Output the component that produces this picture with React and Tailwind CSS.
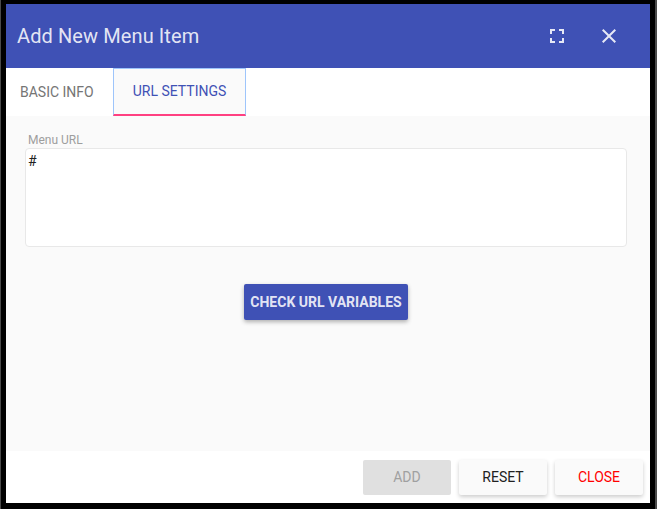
import { useState } from "react";

function FullscreenIcon() {
  return (
    <svg viewBox="0 0 24 24" className="w-6 h-6" fill="currentColor">
      <path d="M7 14H5v5h5v-2H7v-3zm-2-4h2V7h3V5H5v5zm12 7h-3v2h5v-5h-2v3zM14 5v2h3v3h2V5h-5z" />
    </svg>
  );
}

function CloseIcon() {
  return (
    <svg viewBox="0 0 24 24" className="w-6 h-6" fill="currentColor">
      <path d="M19 6.41L17.59 5 12 10.59 6.41 5 5 6.41 10.59 12 5 17.59 6.41 19 12 13.41 17.59 19 19 17.59 13.41 12z" />
    </svg>
  );
}

export default function App() {
  const [tab, setTab] = useState(1);
  const [url] = useState("#");

  return (
    <div
      className="w-[657px] h-[509px] bg-black flex overflow-hidden"
      style={{ fontFamily: "Roboto, 'Noto Sans', sans-serif" }}
    >
      <div className="w-[1px] bg-[#4a4a4a] shrink-0" />
      <div className="w-[5px] shrink-0" />

      <div className="w-[644px] shrink-0 flex flex-col pt-[4px]">
        <div className="h-[499px] flex flex-col">
          {/* Header */}
          <div className="h-[64px] bg-[#3f51b5] flex items-center pl-[11px] pr-[29px] shrink-0">
            <h2 className="text-[20px] tracking-[0.1px] leading-none text-white/[0.87] font-normal">
              Add New Menu Item
            </h2>
            <div className="ml-auto flex items-center gap-[28px] text-white/[0.87]">
              <button>
                <FullscreenIcon />
              </button>
              <button>
                <CloseIcon />
              </button>
            </div>
          </div>

          {/* Tabs */}
          <div className="h-[48px] bg-white flex shrink-0">
            <button
              onClick={() => setTab(0)}
              className={`w-[107px] h-full flex items-center pl-[14px] text-[14px] uppercase ${
                tab === 0 ? "text-[#3f51b5] bg-[#fafafa] border-b-2 border-[#ff4081]" : "text-[#757575]"
              }`}
            >
              Basic Info
            </button>
            <button
              onClick={() => setTab(1)}
              className={`w-[133px] h-full flex items-center justify-center text-[14px] uppercase ${
                tab === 1
                  ? "text-[#3f51b5] bg-[#fafafa] border border-[#9ec5fb] border-b-2 border-b-[#ff4081]"
                  : "text-[#757575]"
              }`}
            >
              URL Settings
            </button>
          </div>

          {/* Content */}
          <div className="flex-1 bg-[#fafafa] pl-[19px] pr-[23px] pt-[17px]">
            <label className="block pl-[3px] text-[12px] leading-[14px] text-[#9e9e9e]">
              Menu URL
            </label>
            <div className="mt-[1px] h-[99px] bg-white border border-[#e8e8e8] rounded-[4px] pl-[2px] pt-[2px] text-[14px] text-[#212121]">
              {url}
            </div>
            <div className="flex justify-center mt-[37px]">
              <button className="w-[164px] h-[36px] bg-[#3f51b5] rounded-[2px] shadow-[0_2px_4px_rgba(0,0,0,0.3)] text-[14px] font-bold text-white/[0.87]">
                CHECK URL VARIABLES
              </button>
            </div>
          </div>

          {/* Footer */}
          <div className="h-[52px] bg-white flex justify-end items-start pt-[9px] pr-[7px] gap-[8px] shrink-0">
            <button
              disabled
              className="w-[88px] h-[35px] bg-[#e0e0e0] rounded-[2px] text-[14px] font-normal text-[#a0a0a0]"
            >
              ADD
            </button>
            <button className="w-[88px] h-[35px] bg-[#fafafa] rounded-[2px] shadow-[0_2px_4px_rgba(0,0,0,0.2)] text-[14px] font-normal text-[#212121]">
              RESET
            </button>
            <button className="w-[88px] h-[35px] bg-[#fafafa] rounded-[2px] shadow-[0_2px_4px_rgba(0,0,0,0.2)] text-[14px] font-normal text-[#ff0000]">
              CLOSE
            </button>
          </div>
        </div>
      </div>

      <div className="w-[5px] shrink-0" />
      <div className="w-[2px] bg-[#4a4a4a] shrink-0" />
    </div>
  );
}
